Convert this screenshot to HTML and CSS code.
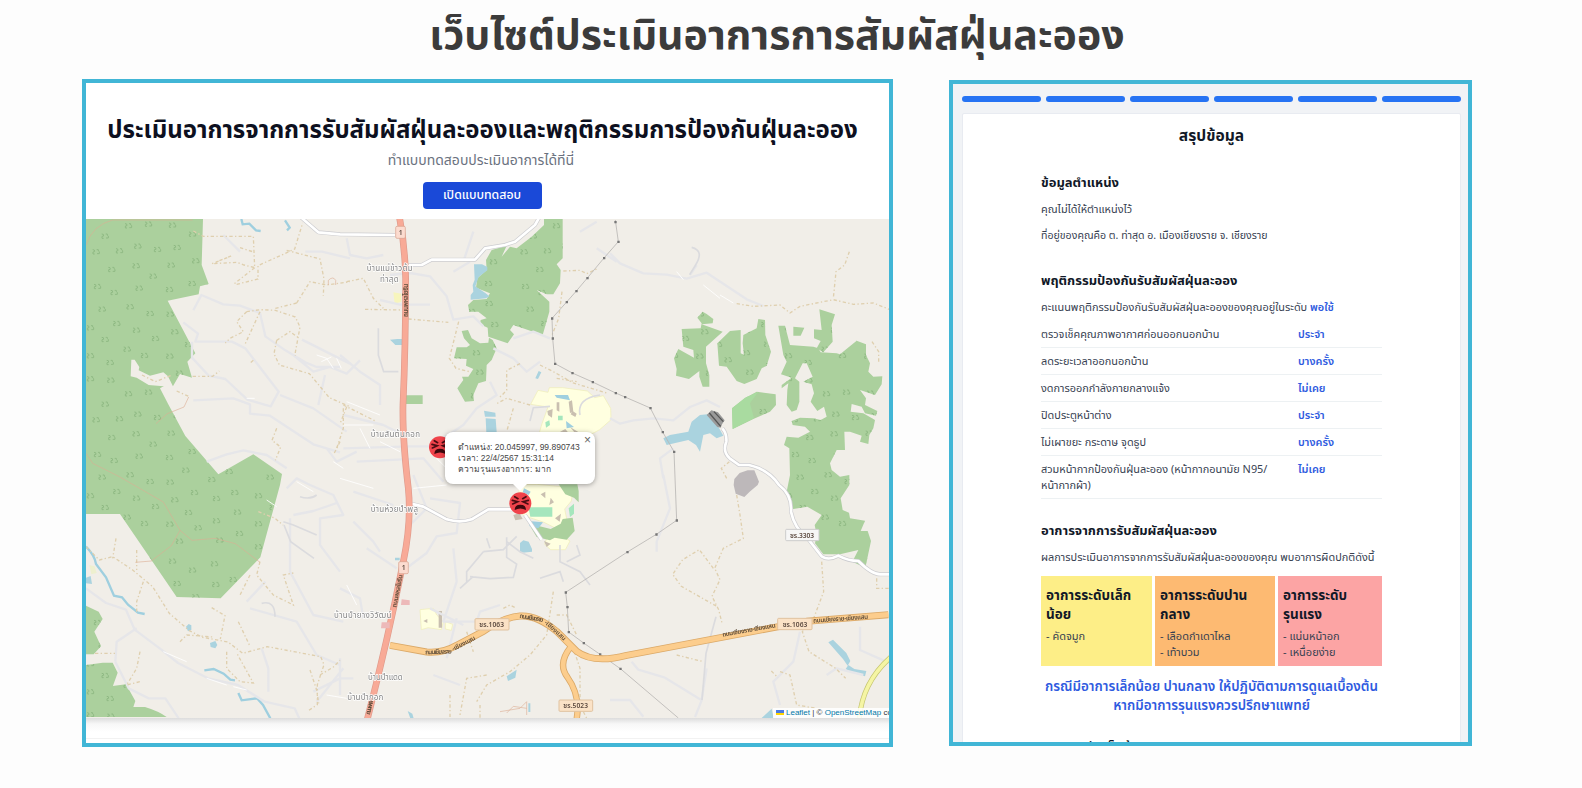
FILE: index.html
```html
<!DOCTYPE html>
<html lang="th">
<head>
<meta charset="utf-8">
<title>เว็บไซต์ประเมินอาการการสัมผัสฝุ่นละออง</title>
<link rel="stylesheet" href="styles.css">
</head>
<body>
<h1 class="page-title"><span>เว็บไซต์ประเมินอาการการสัมผัสฝุ่นละออง</span></h1>
<main class="panels">
<section class="panel home">
  <header class="hero">
    <h2 class="hero-title"><span>ประเมินอาการจากการรับสัมผัสฝุ่นละอองและพฤติกรรมการป้องกันฝุ่นละออง</span></h2>
    <p class="hero-sub"><span>ทำแบบทดสอบประเมินอาการได้ที่นี่</span></p>
    <button class="hero-btn"><span>เปิดแบบทดสอบ</span></button>
  </header>
  <div class="map">
    <svg class="map-svg" viewBox="18 12 2409 1497" width="803" height="499" preserveAspectRatio="none">
      <defs>
        <path id="t" d="M-10-6l5 1 1 5-5 1v6h5M2-6h5v4l3 2v6h-7"/>
        <pattern id="trees" width="504" height="504" patternUnits="userSpaceOnUse">
          <g fill="none" stroke="#8fb983" stroke-width="3">
            <use href="#t" x="145" y="32"/><use href="#t" x="205" y="27"/><use href="#t" x="277" y="30"/><use href="#t" x="75" y="63"/><use href="#t" x="173" y="93"/><use href="#t" x="48" y="110"/><use href="#t" x="118" y="107"/><use href="#t" x="232" y="103"/><use href="#t" x="291" y="97"/><use href="#t" x="95" y="163"/><use href="#t" x="168" y="152"/><use href="#t" x="273" y="150"/><use href="#t" x="219" y="183"/><use href="#t" x="52" y="214"/><use href="#t" x="102" y="232"/><use href="#t" x="177" y="219"/><use href="#t" x="268" y="223"/><use href="#t" x="66" y="282"/><use href="#t" x="150" y="275"/><use href="#t" x="210" y="295"/><use href="#t" x="270" y="297"/><use href="#t" x="110" y="325"/><use href="#t" x="31" y="338"/><use href="#t" x="169" y="345"/><use href="#t" x="284" y="350"/><use href="#t" x="226" y="370"/><use href="#t" x="75" y="373"/><use href="#t" x="141" y="402"/><use href="#t" x="193" y="421"/><use href="#t" x="90" y="442"/><use href="#t" x="269" y="423"/><use href="#t" x="31" y="422"/><use href="#t" x="31" y="491"/><use href="#t" x="92" y="495"/><use href="#t" x="298" y="474"/><use href="#t" x="347" y="137"/><use href="#t" x="337" y="57"/><use href="#t" x="336" y="205"/><use href="#t" x="325" y="388"/><use href="#t" x="409" y="346"/><use href="#t" x="343" y="328"/><use href="#t" x="464" y="328"/><use href="#t" x="354" y="434"/><use href="#t" x="409" y="413"/><use href="#t" x="472" y="387"/><use href="#t" x="478" y="451"/><use href="#t" x="419" y="471"/><use href="#t" x="403" y="38"/><use href="#t" x="407" y="100"/><use href="#t" x="459" y="85"/><use href="#t" x="317" y="261"/><use href="#t" x="447" y="265"/><use href="#t" x="395" y="289"/><use href="#t" x="400" y="160"/><use href="#t" x="460" y="140"/><use href="#t" x="390" y="215"/><use href="#t" x="445" y="205"/>
          </g>
        </pattern>
        <g id="forest">
          <path d="M18 12H369L365 150 386 207 360 214 356 238 263 257 346 415 322 440 336 488 300 477 277 517 262 508 240 520 264 566 316 663 415 778 520 718 606 777 600 810 541 1027 422 1150 290 1146 120 897H18z"/>
          <path d="M18 1172l38 18 12 22-25 38 20 44-22 24H18zM18 1350l50-7h30l15 30-25 70 10-30 40-5 28 50-6 18h35q40 12 65 30H18z"/>
          <g transform="translate(780 0)">
            <path d="M612 12L668 12 668 130 650 148 662 165 660 205 640 238 620 238 590 225 628 260 628 290 608 360 520 330 510 345 522 358 503 385 445 365 443 338 420 328 422 315 440 310 415 290 388 290 384 270 400 255 440 252 450 235 408 218 412 190 440 165 438 135 455 105 500 92 485 125 510 95 530 100 575 65 612 30z"/>
            <path d="M365 348L384 345 395 370 420 385 445 383 447 368 458 375 470 400 455 435 440 450 438 498 415 505 400 540 402 558 375 560 352 520 370 495 366 485 385 485 400 462 378 452 380 432 342 430 350 397 380 397 390 390 372 370zM198 541h50v26h-50z"/>
          </g>
          <g transform="translate(1590 0)">
            <path d="M278 290L290 297 310 312 308 325 275 328 338 350 288 395 288 445 298 480 298 515 278 515 268 485 268 468 237 492 198 482 200 462 192 430 205 402 252 428 250 405 220 395 215 342 272 340 275 325 262 308z"/>
            <path d="M322 385L360 348 392 345 392 415 402 420 398 385 400 360 440 340 445 312 465 315 466 360 483 410 470 452 455 460 440 492 403 507 380 498 350 455 327 452z"/>
            <path d="M440 530L497 538 498 570 480 590 430 612 368 642 366 580 405 550z"/>
            <path d="M505 332L525 332 540 390 610 395 625 400 632 412 680 415 690 418 740 377 768 388 768 420 780 445 775 470 790 485 817 484 815 508 795 540 750 525 768 550 765 570 802 588 798 602 765 595 755 575 725 567 722 590 760 595 795 615 790 640 778 660 775 687 750 680 755 662 720 650 703 650 705 705 680 705 660 745 665 765 690 785 718 780 718 810 692 850 698 885 717 893 720 910 765 917 752 948 773 948 783 978 766 1058 727 1040 745 1005 690 1018 640 1018 615 985 620 960 614 930 635 900 592 875 545 883 530 830 540 780 538 700 522 690 530 665 565 668 600 650 585 635 548 630 545 618 570 608 610 610 632 615 650 605 642 575 622 588 602 560 612 535 605 508 580 500 608 485 590 445 578 445 555 490 568 500 568 560 560 585 545 590 530 570 532 525 535 505 515 520 515 510 545 488 513 478 530 440 520 420z"/>
            <path d="M628 283L675 298 665 330 668 380 640 412 620 400 632 378 612 370 612 343 635 345zM550 335L583 338 572 362 550 362z"/>
          </g>
        </g>
        <g id="face">
          <circle r="33" fill="#f0434b"/>
          <g fill="none" stroke="#4a0c12" stroke-width="5" stroke-linecap="round">
            <path d="M-24-9l16 4-15 7M24-9L8-5l15 7M-17-20l10 6M17-20L7-14"/>
          </g>
          <path d="M-17 20q0-16 17-16t17 16q-17-9-34 0z" fill="#3d080d"/>
        </g>
      </defs>
      <rect x="18" y="12" width="2409" height="1497" fill="#f1eee8"/>

      <use href="#forest" fill="#abd09d"/>
      <use href="#forest" fill="url(#trees)"/>
      <path d="M154 434l10 0 14 22-2 10 34 16 40-10 14 12 20 40-12 4-22-14-44-4-36-22-18-4z" fill="#f1eee8"/>
      <path d="M1956 580L1995 548 2035 530 2010 565 2022 610 1958 642z" fill="#a9dba0"/>

      <g fill="#aad3df">
        <path d="M1182 148l24 0 16 8 0 10-26 20-10 28 30 20 12 10-10 6-46 4 0-14 8-10-2-20 6-16zM1212 587l34 6 1 12h-32zM1217 610l30 2 3 40h-31zM930 374l22-2 14 0v18l-20 0-8-8z"/>
        <path d="M1750 670L1770 660 1825 650 1835 620 1860 600 1882 598 1915 635 1930 662 1910 670 1890 655 1870 660 1860 710 1848 690 1825 675 1760 690z"/>
        <path d="M1320 984l10-8 16 4 10 22 0 8-36 4zM1280 1384l30-20-4 24-22 10zM2245 1282l14-8 40 40 12 24-8 14-14-20zM2305 1350l18 12 36 6-4 16-40-12-18-10zM2045 1509l30-28 6 28zM318 1235l8-8 8 4v14l-10 4zM390 1284l16-6 6 12-6 10-14-4zM945 1028h14v8h-14zM1366 490l10-22 8 4-10 20zM983 1488l14 8 4 14h-10zM18 1088l14-5 4 24-18-2zM1345 1465h6v26h-6z"/>
      </g>
      <g fill="none" stroke="#9fcfdf" stroke-width="7">
        <path d="M484 12l4 16 20-2 20 20 14 2M615 16l14 22-8 8M18 995q26 26 30 52l30 40 24 55 24 5 18 22 30 24 20 4M373 1366l28-4 30 14 20 18 14 2M475 1434l10 22 46-6 18 20 22 40"/>
      </g>

      <g fill="#ffffe0" stroke="#efedb5" stroke-width="2">
        <path d="M1352 568l22-42 30 6 4-14 40 0 74 10 22 20 26-6 22 38 1 34-34 30-30 16H1376l10-34 18-50z"/>
        <path d="M1320 808l50 0 110 10-6 40-20 24 8 40-30 20-40-20-60-20-22-20zM1400 970l40-12 30 20-14 26-44 0-18-16zM1020 1184l40-4 10 20 20 20-6 24-40-6-20 6z"/>
        <path d="M1096 1220l22 8-4 18-18-4z"/>
      </g>
      <path d="M1345 877h72v28h-66zM1396 622l12-6 2 14-12 8zM1434 602h14v14h-14zM1466 880l16-14 0 30-12 10z" fill="#a5e6bd"/>
      <path d="M1436 808l56 0 4 20 0 34-14-14-26-10zM1448 912l30-4 6 40-24 26-36-6-14 8-40-10-18-30 12-6 48 12 30-16z" fill="#abd09d"/>
      <path d="M1345 918l44 4-14 18-26-6zM1424 540l40 0 6 16-40-8zM1458 618l24 18-22 4zM1332 820l20 10-6 10-18-8z" fill="#9fcfdf"/>
      <g fill="#c9bfb0"><path d="M1402 588l16-6-2 26-12-8zM1466 560l10-4 4 34-10 4zM1430 562l8 0 0 28-8-4zM1478 588l12 8-4 10-14-8zM1382 838l14-8v20zM1412 848l10 14-14 8zM1425 910l18-14-4 24zM1392 978l20 8-12 10zM1030 1218l12-6v12zM1076 1188l10 0v50h-10zM1440 650l16-8 8 10zM1470 636l30 18-8 8zM1300 900l18-6 10 18-22 4z"/></g>
      <path d="M940 232l24 4v24l-20 6z" fill="#f7f5bd"/>
      <path d="M28 1050l16 4 6 20-16 4z" fill="#eef0cf"/>

      <g fill="none" stroke="#e6e6e9" stroke-width="7" stroke-linejoin="round">
        <path d="M340 286l24-46 66 28 50 4 60 22 16 70 60 42 60 36 34 14 70 0M310 322l44 34-8 24 110 0 40 20 100 130-24 44-70-20-66-62-50-10-50-54 0-48M340 556l120-6 50 18 0 28 60 6 130 86 80 24M380 740l60-22 50-12 70 14 60 40M666 374l100 50 44 22M676 110l50 0 84 20M640 420l60 50 50-14 50 20 40-40M600 540l100 40 100 70M430 60l50 50M735 480l-20 90M740 700l30 40 60-30"/>
        <path d="M18 1120l60 44 60 20 26 60 80 60 50 40 90 46 90 20 80 50 90 20 20 44M106 1340l4-60 60-40M106 1340l40 80 60 30 50 0 40 60M640 900l60-12 70-24M630 910l0 160 70 130 90 20M500 1160l56-60M510 1180l140 40 60 100 70 30M545 1300l20 60v70M620 820l30-30 40 20 70 30 30 60-70 10 0 80 60 80M700 1430l80-40 40 0M790 1360l-80 100M780 1330v110"/>
        <path d="M800 70l10 50 50 10 50-10M930 180l60-6 60 10 50 60 20 70 60-10 30 30M900 255l60 14 90 0M1180 50l-30 90M1120 170l50-30M1230 500l20 40-60 40-40 50-60 40M1240 400l60 30 40 40 40-30M1300 370l60-20 50 20M780 420l60 50 60 40 0 60M790 600l120 30 40 20M790 700l200-6 110 0M830 740l200-10 60 70M820 830l120 40M1000 780l40 100-60 60M1050 850l90 14-10 90-60 10-30 50-80 60"/>
        <path d="M820 920l60 60 20 30M780 1120l60 30 10 60M860 1000l90 60M1120 1000l10 100-20 60-20 60 100 0 10-30 60-20M1050 1180l100 50M1100 1330l30-120M1060 1380l80 30M1500 50l50-30M1550 100l60 40M1590 115l30 30 70 30 70 4 60 12 60-18 120 80 50 20M1830 180l20-30M1590 610l30 16 40-10 60-6 60 6 50-40 50-20 40 20M1750 790l-10-60 40-30M1750 780l20 100-40 100 0 30"/>
        <path d="M1655 1340l20 24 80 24 110 68-20 50M1590 1455l60 0 40 50M1880 1360l-16 100M2160 1250l-20 90-60 60 20 70M2340 1235l0 70 90 40M2240 1380l30-20 80 20"/>
      </g>
      <g fill="none" stroke="#dbdbde" stroke-width="5">
        <path d="M610 920l30 10 70 30M612 930l20 50 70 50M660 845q30 10 50-5M545 1165q40-10 40 40M1160 1100l0-30 50-60M1170 1085l60 6 70-4 10-40-30-20 0-60M1210 1010l60-6 40-40M1230 1000l-10-30M1280 980l40 30 40 20M1440 990v50l60 30 30 40M1460 1040l40-20-10-30M1380 1090l60-20 10 30M1140 1120l40-36M895 340v80l16 50h44M1350 618l10-40 50-4M1500 600q-10-50 60-60M1835 97q40 10 10 56l-16 26"/>
        <path d="M1908 1205l-30 110-12 140"/>
      </g>
      <g fill="none" stroke="#fff" stroke-width="3" opacity=".85">
        <path d="M710 420l30 10 20 30M724 440l30-14M770 430l14 30M500 550l24 0M760 740l30 20M560 855l30 20M250 1310l70 30M380 1390l60 20M460 1415l40 10M790 630l90 0M800 560l100 40M900 680l60 30M780 790l100 30M840 640l30 60M1060 720l60 60M1000 820l100-10M650 800l50 30M800 1110l30 60M740 1440l60 10M1790 170l20 24M1870 210l50 40M1920 240l40 24"/>
      </g>

      <g fill="none" stroke="#dfcfae" stroke-width="4" stroke-dasharray="10 7 4 7">
        <path d="M340 48l30 16h150l4 94-32-8-20-8-76 4 60-24-50 20M480 98l44 14M524 158l-66 52M470 208l64-16 0-40 80-36 30-14 24-78M620 106l100 26 12 60-2 50M650 264l40-64 50 10 70-10M586 280l64-16M500 290l40-6 46 2 60 20 14 30-14 76 0 10M500 290l-30 30 20 30-40 20-14 14M540 290l-46 100M590 376l40-26 28 20M590 376l-8 40 16 34 90 26 60 72 60 26M800 576l-20 50M338 484l60 0 20-16M186 480l40 20 50-20M290 528l36 16M520 436l-12 10M590 640l-14 36 26 20-16 40M780 680l-20 40"/>
        <path d="M18 995l40 40 40-10 60 40 60 50 50 80 60 52 40 20 76 14 44 34 74-20 160 30 10 24-20 60 0 60-30 20M108 970l-10 60M170 1005l0 60M190 1100l-20 60v30M395 1178l40 24-14 70M475 1220l36 76M440 1310l0 50 40 40 40 4-50-90M300 1280l20-20 80 6M510 1080l-30 60M540 1040l-10 40 50 60 60 30-30-90 30-6M535 890l50 20 24 20M45 1315h60M180 1310l-10 50-30 50 40-10M690 1365l20 60 6 40M720 1380l40-24 20-20"/>
        <path d="M800 200l50-10 30 60 30 30M855 283l110 2M985 312l120 10M1136 320l-28 110 20 30 40 10M1320 446l-40 20 0 60-20 20M1350 570l-70-20-30 16M1300 580l-20 70M1380 450l40 20 60 34 100 30M1430 490l60 10M1450 168l50-2 20 10 30-14M1446 230l-10 80-20 50M790 570l100 50M790 580v60l-20 60M1270 1180l20-10 20 10M1160 1250l20 60M1420 1130l-20 130-50 60-60 50-70 40-30 50M1220 1380l-60 10-20 110M1110 1440v70M1200 1470v40M1480 1300l20 60v110l20 40M1430 1200l30 0 30 60"/>
        <path d="M1970 266l50 8 80-4 30 24 30-20 100-20 60 14 60-4 70 28M2308 110l-14 40-26 20-8 80M2376 380l20 30v30M1940 790l-16-30 24-20M1970 840l10 60 10 70-60 30-26 60 16 34-24 50 20 40 10 40M1900 1060l-42-56-50 30-30 44 26 36 106 60M1790 1320l80 20M2225 1040l6 90-30 80-34 40 20 60 80 50 30 30M2100 1370l30 10 20 90 60 10M2390 1090l0 30h37M2074 1368l20 20"/>
      </g>
      <g fill="none" stroke="#dcae93" stroke-width="3" opacity=".6">
        <path d="M18 90q20-60 80-75h240M18 715l20 30 80 40 132 76 50 85 36 30 70-6 60 16 74 56M300 946l-26 46-60 46-48 4M326 546l-14 30-50 20-34 30M745 210v-14q14-14 22 0v14M1260 1490l60-10 20-20v40M1340 1480l-40-6-20 20"/>
      </g>

      <path fill="none" stroke="#b9b7b4" stroke-width="2.5" d="M1606 15L1615 80 1572 129 1522 189 1489 228 1460 261 1416 310 1418 370 1425 446 1477 474 1538 501 1607 534 1635 546 1711 579 1748 651 1782 710 1790 916 1729 958 1642 1011 1457 1132 1462 1176 1466 1251 1511 1284 1560 1318 1621 1361 1795 1509"/>
      <path fill="#777" d="M1603 18h7v7h-7zM1612 77h7v7h-7zM1569 126h7v7h-7zM1519 186h7v7h-7zM1486 225h7v7h-7zM1457 258h7v7h-7zM1413 307h7v7h-7zM1415 367h7v7h-7zM1422 443h7v7h-7zM1474 471h7v7h-7zM1535 498h7v7h-7zM1604 531h7v7h-7zM1632 543h7v7h-7zM1708 576h7v7h-7zM1745 648h7v7h-7zM1779 707h7v7h-7zM1787 913h7v7h-7zM1726 955h7v7h-7zM1639 1008h7v7h-7zM1454 1129h7v7h-7zM1459 1173h7v7h-7zM1463 1248h7v7h-7zM1508 1281h7v7h-7zM1557 1315h7v7h-7zM1618 1358h7v7h-7z"/>

      <g fill="none" stroke-linejoin="round">
        <path id="w" stroke="#cdcdd0" stroke-width="12" d="M655 0l60 52 65 6 165 2M985 150l40 0 30-16 130 0 30-34 60-10 30-10 60-50 18-32M990 865l40 10 70 38q40 12 75 0l50-30h90M1335 900l50 74M1927 640q14 16 12 40 -12 30 10 50l28 20h30q60 14 90 60 40 30 36 80 10 50 50 80l42 54q20 14 50-2 30 16 60 16 40 40 66 40h38"/>
        <path stroke="#fff" stroke-width="8" d="M655 0l60 52 65 6 165 2M985 150l40 0 30-16 130 0 30-34 60-10 30-10 60-50 18-32M990 865l40 10 70 38q40 12 75 0l50-30h90M1335 900l50 74M1927 640q14 16 12 40 -12 30 10 50l28 20h30q60 14 90 60 40 30 36 80 10 50 50 80l42 54q20 14 50-2 30 16 60 16 40 40 66 40h38"/>
        <path stroke="#dba968" stroke-width="21" d="M930 1291l110 20q50 4 90-20l80-42q60-42 110-46t110 46l60 60q50 38 150 12l540-102 245-20"/>
        <path stroke="#dba968" stroke-width="19" d="M1472 1296q-40 50-10 90 40 56 28 126"/>
        <path stroke="#fccd8d" stroke-width="16" d="M930 1291l110 20q50 4 90-20l80-42q60-42 110-46t110 46l60 60q50 38 150 12l540-102 245-20"/>
        <path stroke="#fccd8d" stroke-width="14" d="M1472 1296q-40 50-10 90 40 56 28 126"/>
        <path stroke="#c5c56f" stroke-width="15" d="M2338 1509q10-110 97-185"/>
        <path stroke="#f5f5a4" stroke-width="11" d="M2338 1509q10-110 97-185"/>
        <path stroke="#df9a8b" stroke-width="20" d="M957 0q18 90 20 190 0 200-8 380-2 100 16 250 10 100-15 220-50 250-110 480"/>
        <path stroke="#f8aa97" stroke-width="16" d="M957 0q18 90 20 190 0 200-8 380-2 100 16 250 10 100-15 220-50 250-110 480"/>
      </g>
      <path fill="#bdb8ba" d="M1961 810l2-18 16-18 24-8h20l14 34-4 10-24 20-16 16-26-10z"/>
      <path d="M1880 600l14-14 20 6 20 24-8 12 -4 10-10-2z" fill="#9a9a9a"/><path d="M1888 594l34 40M1902 590l28 30" stroke="#555" stroke-width="4"/>
      <path fill="#edb9b9" d="M905 1222h24v18h-26zM965 1153l24 3v14h-26z"/>

      <g class="shield" font-size="20">
        <rect x="947" y="34" width="29" height="36" rx="4" fill="#fcdcd0" stroke="#d8a08d" stroke-width="2"/><text x="956" y="60">1</text>
        <rect x="956" y="1040" width="29" height="36" rx="4" fill="#fcdcd0" stroke="#d8a08d" stroke-width="2"/><text x="965" y="1066">1</text>
        <rect x="1185" y="1211" width="102" height="34" rx="3" fill="#fbe2c6" stroke="#e0c29f" stroke-width="3"/><text x="1198" y="1236" textLength="74">ชร.1063</text>
        <rect x="2093" y="1210" width="103" height="34" rx="3" fill="#fbe2c6" stroke="#e0c29f" stroke-width="3"/><text x="2108" y="1235" textLength="74">ชร.1063</text>
        <rect x="1437" y="1455" width="101" height="34" rx="3" fill="#fbe2c6" stroke="#e0c29f" stroke-width="3"/><text x="1450" y="1480" textLength="74">ชร.5023</text>
        <rect x="2117" y="943" width="100" height="34" rx="3" fill="#f6f6f6" stroke="#ccc" stroke-width="3"/><text x="2130" y="968" textLength="72">ชร.3303</text>
      </g>
      <g class="place" font-size="24">
        <text x="860" y="168" textLength="138">บ้านแม่ข้าวต้ม</text><text x="900" y="200" textLength="56">ท่าสุด</text>
        <text x="872" y="666" textLength="148">บ้านสันต้นกอก</text>
        <text x="872" y="892" textLength="142">บ้านห้วยป่าพลู</text>
        <text x="762" y="1210" textLength="172">บ้านป่ายางวิวัฒน์</text>
        <text x="864" y="1395" textLength="104">บ้านป่าแดด</text>
        <text x="802" y="1456" textLength="108">บ้านป่ากอก</text>
      </g>
      <g class="road" font-size="19">
        <text transform="translate(984 306) rotate(-90)" textLength="100">ถนนพหลโยธิน</text>
        <text transform="translate(949 1178) rotate(-79)" textLength="100">ถนนพหลโยธิน</text>
        <text transform="translate(869 1500) rotate(-76)" textLength="44">ถนนพหล</text>
        <text transform="translate(1036 1318) rotate(-2)" textLength="80">ถนนเชียงราย</text><text transform="translate(1120 1308) rotate(-27)" textLength="76">-เชียงแสน</text>
        <text transform="translate(1318 1208) rotate(10)" textLength="72">ถนนเชียงราย</text><text transform="translate(1392 1224) rotate(42)" textLength="80">-เชียงแสน</text>
        <text transform="translate(1928 1265) rotate(-10)" textLength="162">ถนนเชียงราย-เชียงแสน</text>
        <text transform="translate(2200 1223) rotate(-4)" textLength="165">ถนนเชียงราย-เชียงแสน</text>
      </g>
      <use href="#face" x="1080" y="697"/>
      <use href="#face" x="1321" y="865"/>
    </svg>
    <div class="popup">
      <p><span>ตำแหน่ง: 20.045997, 99.890743</span></p><p><span>เวลา: 22/4/2567 15:31:14</span></p><p><span>ความรุนแรงอาการ: มาก</span></p>
      <b class="close">×</b>
    </div>
    <div class="attrib"><i class="flag"></i><a>Leaflet</a> | © <a>OpenStreetMap</a> co</div>
  </div>
  <div class="map-foot"></div>
</section>

<section class="panel summary">
  <div class="steps"><i></i><i></i><i></i><i></i><i></i><i></i></div>
  <div class="card">
    <h2 class="card-title"><span>สรุปข้อมูล</span></h2>
    <h3 class="s1"><span>ข้อมูลตำแหน่ง</span></h3>
    <p class="p1"><span>คุณไม่ได้ให้ตำแหน่งไว้</span></p>
    <p class="p2"><span>ที่อยู่ของคุณคือ ต. ท่าสุด อ. เมืองเชียงราย จ. เชียงราย</span></p>
    <h3 class="s2"><span>พฤติกรรมป้องกันรับสัมผัสฝุ่นละออง</span></h3>
    <p class="p3"><span>คะแนนพฤติกรรมป้องกันรับสัมผัสฝุ่นละอองของคุณอยู่ในระดับ <b>พอใช้</b></span></p>
    <ul class="rows">
      <li><span>ตรวจเช็คคุณภาพอากาศก่อนออกนอกบ้าน</span><b>ประจำ</b></li>
      <li><span>ลดระยะเวลาออกนอกบ้าน</span><b>บางครั้ง</b></li>
      <li><span>งดการออกกำลังกายกลางแจ้ง</span><b>ไม่เคย</b></li>
      <li><span>ปิดประตูหน้าต่าง</span><b>ประจำ</b></li>
      <li><span>ไม่เผาขยะ กระดาษ จุดธูป</span><b>บางครั้ง</b></li>
      <li class="tall"><span>สวมหน้ากากป้องกันฝุ่นละออง (หน้ากากอนามัย N95/<br>หน้ากากผ้า)</span><b>ไม่เคย</b></li>
    </ul>
    <h3 class="s3"><span>อาการจากการรับสัมผัสฝุ่นละออง</span></h3>
    <p class="p4"><span>ผลการประเมินอาการจากการรับสัมผัสฝุ่นละอองของคุณ พบอาการผิดปกติดังนี้</span></p>
    <div class="levels">
      <div class="lv mild"><h4>อาการระดับเล็ก<br>น้อย</h4><p>- คัดจมูก</p></div>
      <div class="lv mid"><h4>อาการระดับปาน<br>กลาง</h4><p>- เลือดกำเดาไหล<br>- เท้าบวม</p></div>
      <div class="lv high"><h4>อาการระดับ<br>รุนแรง</h4><p>- แน่นหน้าอก<br>- เหนื่อยง่าย</p></div>
    </div>
    <div class="advice"><span class="a1">กรณีมีอาการเล็กน้อย ปานกลาง ให้ปฏิบัติตามการดูแลเบื้องต้น</span><span class="a2">หากมีอาการรุนแรงควรปรึกษาแพทย์</span></div>
    <h3 class="s4"><span>อาการระดับเล็กน้อย</span></h3>
  </div>
</section>
</main>
</body>
</html>
```
FILE: styles.css
```css
* { box-sizing: border-box; margin: 0; padding: 0; }
body { width: 1582px; height: 788px; overflow: hidden; background: #fdfdfd; font-family: "Noto Sans Thai", "Noto Sans", "Liberation Sans", sans-serif; color: #111827; }
span { white-space: nowrap; }
.page-title { height: 79px; padding-right: 28px; text-align: center; font-size: 41px; line-height: 73px; color: #3b3b3b; font-weight: 700; }
.panels { display: flex; align-items: flex-start; gap: 56px; padding-left: 82px; }
.panel { border: 4px solid #41b6d6; overflow: hidden; }
.home { width: 811px; height: 668px; background: #fff; }
.hero { height: 136px; display: flex; flex-direction: column; align-items: center; }
.hero-title { height: 60px; margin-top: 18px; line-height: 60px; font-size: 24px; margin-right: 10px; color: #0d1020; }
.hero-sub { height: 22px; line-height: 22px; font-size: 14px; color: #6b7280; margin: -11px 13px 0 0; }
.hero-btn { width: 119px; height: 27px; margin: 10px 11px 0 0; border: 0; border-radius: 4px; background: #1a49d8; color: #fff; font: 500 12.3px/27px "Noto Sans Thai", "Noto Sans", sans-serif; }
.map { position: relative; height: 499px; overflow: hidden; }
.map-svg { display: block; filter: blur(.45px); }
.shield text { fill: #5c4a40; font-weight: 600; }
.place text { fill: #858585; stroke: #fff; stroke-width: 4px; paint-order: stroke; }
.road text { fill: #5f4d3a; font-weight: 600; }
.popup { position: absolute; left: 359px; top: 213px; width: 150px; height: 52px; padding: 10px 0 0 13px; border-radius: 8px; background: #fff; box-shadow: 0 1px 5px rgba(0,0,0,.35); font: 8.5px/11px "Liberation Sans", sans-serif; color: #444; }
.popup::after { content: ""; position: absolute; left: 68px; top: 52px; border: 7px solid transparent; border-top: 7px solid #fff; border-bottom: 0; }
.close { position: absolute; right: 4px; top: 3px; font-size: 12px; font-weight: 400; color: #666; }
.attrib { position: absolute; left: 687px; bottom: 0; width: 116px; height: 10px; padding-left: 3px; white-space: nowrap; background: rgba(255,255,255,.85); font: 8px/10px "Liberation Sans", sans-serif; color: #333; }
.attrib a { color: #0078a8; }
.flag { display: inline-block; width: 8px; height: 5px; margin-right: 2px; background: linear-gradient(#4c7be1 50%, #ffd500 50%); }
.map-foot { height: 25px; border-bottom: 4px solid #fff; background: linear-gradient(#dcdcdc, #f7f7f7 6px, #fff 14px, #fff 20px, #f2f2f2 20px); }
.summary { width: 523px; height: 666px; margin-top: 1px; padding: 12px 7px 0 9px; background: #f1f3f6; }
.steps { display: grid; grid-template-columns: repeat(6, 1fr); gap: 5.5px; }
.steps i { height: 6px; border-radius: 3px; background: #2673f3; }
.card { height: 660px; margin: 11px 0 0; padding: 0 78px; background: #fff; border: 1px solid #e8ebf1; border-radius: 2px; }
.card-title { height: 48px; line-height: 45px; text-align: center; font-size: 15.6px; }
.card h3 { height: 27px; line-height: 28px; font-size: 13px; }
.card > p { height: 27px; line-height: 27px; font-size: 10.9px; color: #374151; }
.card b { color: #2f5be0; font-weight: 600; }
.card .s1 { margin-top: 7px; }
.card .p2 { font-size: 10.6px; }
.card .s2 { margin-top: 17px; }
.card .s3 { margin-top: 18px; }
.rows { list-style: none; font-size: 10.9px; color: #374151; }
.rows li { display: flex; justify-content: space-between; height: 27px; line-height: 16px; padding-top: 6px; border-bottom: 1px solid #edf1f3; }
.rows b { width: 84px; }
.rows .tall { height: 43px; }
.levels { display: flex; gap: 3px; height: 90px; margin-top: 5px; }
.lv { padding: 11px 5px 0; }
.lv h4 { font-size: 13.5px; line-height: 19px; white-space: nowrap; }
.lv p { margin-top: 4px; font-size: 11px; line-height: 16px; color: #374151; white-space: nowrap; }
.mild { width: 111px; background: #fdee87; }
.mid { width: 120px; background: #fdba72; }
.high { width: 104px; background: #fca4a4; }
.advice { display: flex; flex-direction: column; align-items: center; margin-top: 12px; font-size: 13.4px; line-height: 19px; color: #2f5be0; font-weight: 600; }
.card .s4 { margin-top: 17px; }
```
